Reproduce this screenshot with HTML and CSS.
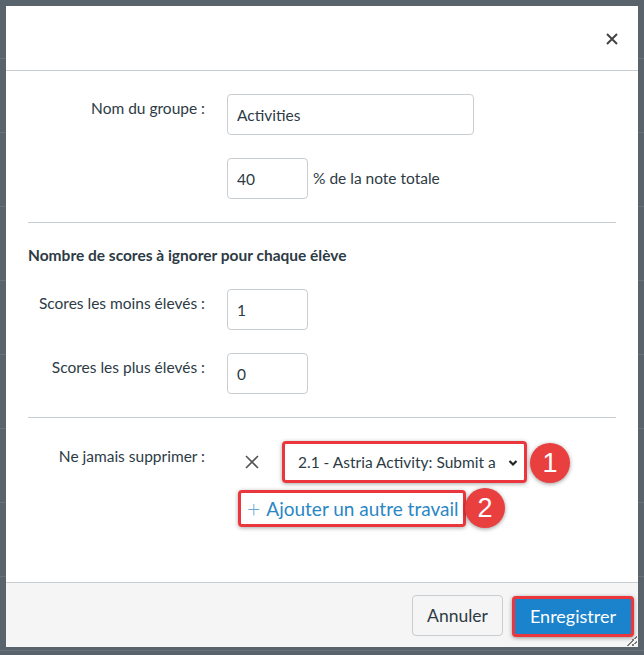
FILE: index.html
```html
<!DOCTYPE html>
<html>
<head>
  <title>Modifier le groupe de travaux</title>
  <link rel="stylesheet" href="styles.css">
</head>
<body>

<div class="dialog">

  <!-- Header -->
  <div class="dialog-header">
    <button class="close-btn" aria-label="Fermer">
      <svg width="12" height="12" viewBox="0 0 12 12"><path d="M1 1 L11 11 M11 1 L1 11" stroke="#444" stroke-width="2" fill="none"/></svg>
    </button>
  </div>

  <!-- Body -->
  <div class="dialog-body">
    <div class="form-row">
      <label class="form-label">Nom du groupe :</label>
      <input class="text-input wide" type="text" value="Activities">
    </div>

    <div class="form-row">
      <span class="form-label"></span>
      <input class="text-input short" type="text" value="40">
      <span class="suffix">% de la note totale</span>
    </div>

    <hr class="divider">

    <h3 class="section-title">Nombre de scores à ignorer pour chaque élève</h3>

    <div class="form-row">
      <label class="form-label">Scores les moins élevés :</label>
      <input class="text-input short" type="text" value="1">
    </div>

    <div class="form-row">
      <label class="form-label">Scores les plus élevés :</label>
      <input class="text-input short" type="text" value="0">
    </div>

    <hr class="divider">

    <div class="form-row never-drop">
      <label class="form-label">Ne jamais supprimer :</label>
      <div class="never-drop-list">
        <div class="drop-item">
          <button class="remove-btn" aria-label="Retirer">
            <svg width="14" height="14" viewBox="0 0 14 14"><path d="M1 1 L13 13 M13 1 L1 13" stroke="#555" stroke-width="1.6" fill="none"/></svg>
          </button>
          <div class="highlight select-box">
            <span class="select-text">2.1 - Astria Activity: Submit a</span>
            <svg class="chevron" width="10" height="8" viewBox="0 0 10 8"><path d="M1.5 2 L5 5.5 L8.5 2" stroke="#222" stroke-width="2.2" fill="none"/></svg>
          </div>
          <span class="badge">1</span>
        </div>
        <div class="add-row">
          <a href="#" class="highlight add-link"><span class="plus">+</span> Ajouter un autre travail</a>
          <span class="badge badge-2">2</span>
        </div>
      </div>
    </div>
  </div>

  <!-- Footer -->
  <div class="dialog-footer">
    <button class="btn">Annuler</button>
    <button class="btn btn-primary">Enregistrer</button>
    <span class="resize-handle"></span>
  </div>

</div>

</body>
</html>
```

FILE: styles.css
```css
body {
  margin: 0;
  font-family: Lato, "Noto Sans", sans-serif;
  color: #2d3b45;
  background-color: #58636c;
  background-image: repeating-linear-gradient(to bottom, transparent 0, transparent 58px, #66717a 58px, #66717a 59px, transparent 59px, transparent 74px);
  height: 655px;
  overflow: hidden;
}

/* Dialog box */
.dialog {
  margin: 6px;
  width: 632px;
  height: 641px;
  background: #fff;
  display: flex;
  flex-direction: column;
  position: relative;
}

.dialog-header {
  height: 64px;
  border-bottom: 1px solid #c7cdd1;
  display: flex;
  align-items: center;
  justify-content: flex-end;
  padding-right: 16px;
}

.close-btn {
  background: none;
  border: none;
  padding: 4px;
  display: flex;
  margin-top: 2px;
}

.dialog-body {
  flex: 1;
  padding: 23px 22px 0 22px;
}

/* Form rows */
.form-row {
  display: flex;
  align-items: flex-start;
  margin-bottom: 23px;
}

.form-label {
  width: 177px;
  flex: none;
  text-align: right;
  font-size: 15.5px;
  line-height: 20px;
  padding-top: 4px;
  margin-right: 22px;
}

.text-input {
  height: 41px;
  box-sizing: border-box;
  border: 1px solid #c7cdd1;
  border-radius: 4px;
  padding: 0 9px;
  font-family: Lato, "Noto Sans", sans-serif;
  font-size: 15.5px;
  color: #2d3b45;
}

.wide { width: 247px; }
.short { width: 81px; }

.suffix {
  font-size: 15.5px;
  line-height: 41px;
  margin-left: 5px;
}

.divider {
  border: none;
  border-top: 1px solid #c7cdd1;
  margin: 0 0 22px 0;
}

.section-title {
  font-size: 15.5px;
  font-weight: bold;
  line-height: 20px;
  margin: 0 0 24px 0;
}

/* Never drop */
.never-drop { margin-bottom: 0; }

.never-drop .form-label { padding-top: 6px; }

.drop-item {
  display: flex;
  align-items: center;
}

.remove-btn {
  width: 50px;
  height: 42px;
  background: none;
  border: none;
  padding: 0;
  display: flex;
  align-items: center;
  justify-content: center;
  margin-right: 5px;
}

.highlight {
  border: 3px solid #e9373d;
  border-radius: 4px;
  box-shadow: 0 1px 4px rgba(0, 0, 0, 0.35);
  box-sizing: border-box;
}

.select-box {
  width: 245px;
  height: 42px;
  display: flex;
  align-items: center;
  justify-content: space-between;
  padding: 0 6px 0 13px;
  font-size: 15.5px;
}

.chevron { margin-top: 2px; }

.badge {
  width: 40px;
  height: 40px;
  border-radius: 50%;
  background: #e9403f;
  color: #fff;
  font-family: "Liberation Sans", Arial, sans-serif;
  font-size: 27px;
  display: flex;
  align-items: center;
  justify-content: center;
  margin-left: 3px;
  margin-top: 3px;
  box-shadow: 0 1px 4px rgba(0, 0, 0, 0.4);
}

.add-row {
  display: flex;
  align-items: center;
  margin-top: 5px;
  margin-left: 11px;
}

.add-link {
  display: flex;
  align-items: center;
  height: 37px;
  width: 228px;
  padding-left: 6px;
  color: #2a87c5;
  text-decoration: none;
  font-size: 19px;
}

.plus {
  font-size: 23px;
  font-weight: 300;
  margin-right: 6px;
  color: #6aa9d5;
}

.badge-2 { margin-left: -1px; margin-top: 0; }

/* Footer */
.dialog-footer {
  height: 64px;
  border-top: 1px solid #c7cdd1;
  background: #f5f5f5;
  display: flex;
  align-items: center;
  justify-content: flex-end;
  padding-right: 4px;
  gap: 9px;
  position: relative;
}

.btn {
  height: 41px;
  width: 91px;
  padding: 0;
  border: 1px solid #c7cdd1;
  border-radius: 4px;
  background: #f5f5f5;
  color: #2d3b45;
  font-family: Lato, "Noto Sans", sans-serif;
  font-size: 17.5px;
}

.btn-primary {
  width: 122px;
  background: #1b82cc;
  color: #fff;
  font-size: 18px;
  border: 3px solid #e9373d;
  box-shadow: 0 1px 4px rgba(0, 0, 0, 0.4);
  margin-top: 2px;
}

.resize-handle {
  position: absolute;
  right: 1px;
  bottom: 1px;
  width: 10px;
  height: 10px;
  background: linear-gradient(135deg, transparent 45%, #777 45%, #777 55%, transparent 55%, transparent 70%, #777 70%, #777 80%, transparent 80%);
}
```
